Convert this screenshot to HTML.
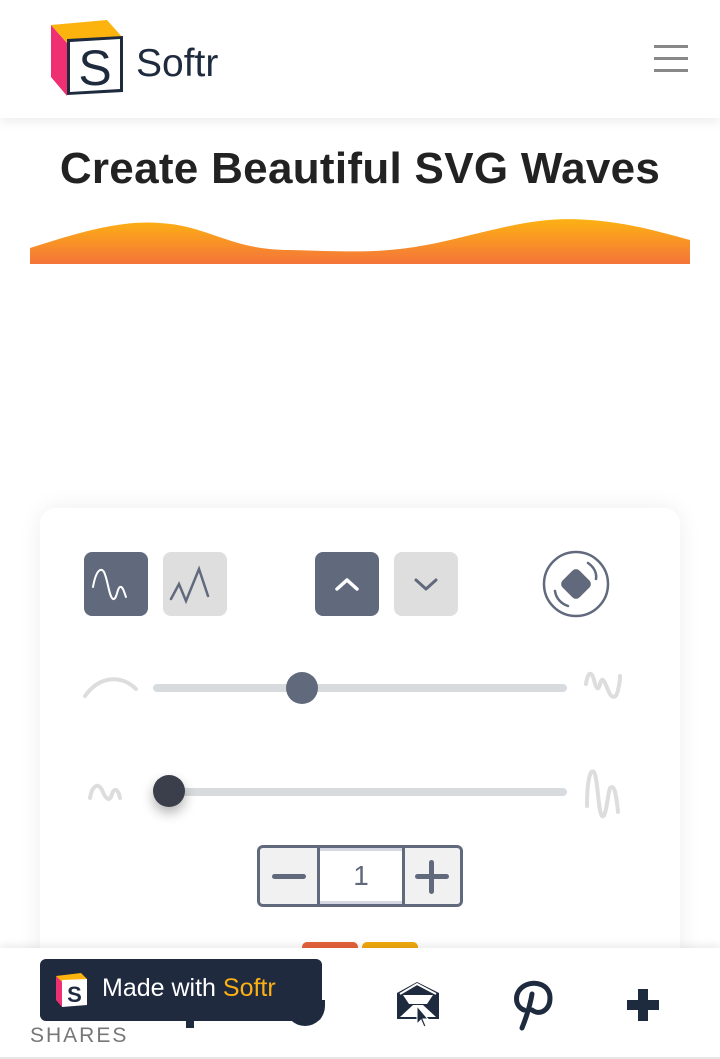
<!DOCTYPE html>
<html><head><meta charset="utf-8"><style>
*{margin:0;padding:0;box-sizing:border-box}
html,body{width:720px;height:1059px;overflow:hidden}
body{background:#fff;font-family:"Liberation Sans",sans-serif;position:relative}
.hdr{position:absolute;left:0;top:0;width:720px;height:118px;background:#fff;box-shadow:0 4px 10px rgba(0,0,0,.07);z-index:2}
h1{position:absolute;top:144px;width:720px;text-align:center;font-size:44px;font-weight:bold;color:#222;letter-spacing:0.3px}
.card{position:absolute;left:40px;top:508px;width:640px;height:551px;background:#fff;border-radius:16px 16px 0 0;box-shadow:0 0 24px rgba(0,0,0,.07)}
.btn{position:absolute;width:64px;height:64px;border-radius:8px}
.dk{background:#616a7c}.lt{background:#dedede}
.track{position:absolute;height:8px;border-radius:4px;background:#d8dbde}
.thumb{position:absolute;border-radius:50%}
.bar{position:absolute;left:0;top:948px;width:720px;height:111px;background:#fff;box-shadow:0 -3px 8px rgba(0,0,0,.08);border-bottom:2px solid #e6e6e6}
</style></head><body>
<div class="hdr">
<svg style="position:absolute;left:50px;top:19px" width="76" height="78" viewBox="0 0 76 78">
<polygon points="1,6 17,24 17,77 1,58" fill="#ee2f72"/>
<polygon points="1,6 57,1 73,19 17,24" fill="#fcb30e"/>
<polygon points="17,20 73,17 73,73 17,76" fill="#1e2a3e"/>
<polygon points="20,23 70,20 70,70 20,73" fill="#fff"/>
<text x="45" y="66" font-family="Liberation Sans" font-size="50" fill="#1e2a3e" text-anchor="middle">S</text>
</svg>
<div style="position:absolute;left:136px;top:42px;font-size:39px;color:#1e2a3e">Softr</div>
<div style="position:absolute;left:654px;top:45px;width:34px">
<div style="height:3px;background:#888;margin-bottom:9px"></div><div style="height:3px;background:#888;margin-bottom:9px"></div><div style="height:3px;background:#888"></div></div>
</div>
<h1>Create Beautiful SVG Waves</h1>
<svg style="position:absolute;left:30px;top:218px" width="660" height="46" viewBox="0 0 660 46">
<defs><linearGradient id="g" x1="0" y1="0" x2="0" y2="1"><stop offset="0" stop-color="#fdb212"/><stop offset="1" stop-color="#f4743a"/></linearGradient></defs>
<path d="M0,30 C50,14 90,2 130,5 C180,8 200,32 260,32 C330,34 360,36 420,22 C480,8 510,-2 560,2 C600,5 630,14 660,22 L660,46 L0,46Z" fill="url(#g)"/>
</svg>
<div class="card"></div>
<div class="btn dk" style="left:84px;top:552px"><svg width="64" height="64" viewBox="0 0 64 64"><path d="M9,35 C12,18 17,15 20,20 C24,28 25,45 29,47 C33,48 33,36 36,35 C39,34 40,40 42,45" fill="none" stroke="#fff" stroke-width="2" stroke-linecap="round"/></svg></div>
<div class="btn lt" style="left:163px;top:552px"><svg width="64" height="64" viewBox="0 0 64 64"><path d="M8,47 L16,32 L23,49 L36,17 L45,44" fill="none" stroke="#616a7c" stroke-width="2.5" stroke-linecap="round"/></svg></div>
<div class="btn dk" style="left:315px;top:552px"><svg width="64" height="64" viewBox="0 0 64 64"><path d="M22,37 L32,28 L42,37" fill="none" stroke="#fff" stroke-width="3.5" stroke-linecap="round" stroke-linejoin="round"/></svg></div>
<div class="btn lt" style="left:394px;top:552px"><svg width="64" height="64" viewBox="0 0 64 64"><path d="M22,28 L32,37 L42,28" fill="none" stroke="#616a7c" stroke-width="3" stroke-linecap="round" stroke-linejoin="round"/></svg></div>
<svg style="position:absolute;left:540px;top:549px" width="72" height="72" viewBox="0 0 72 72">
<ellipse cx="36" cy="35" rx="32" ry="32" fill="none" stroke="#616a7c" stroke-width="2.5"/>
<rect x="24" y="23" width="24" height="24" rx="5" fill="#616a7c" transform="rotate(45 36 35)"/>
<path d="M48,14 C54,18 57,24 56,30" fill="none" stroke="#616a7c" stroke-width="2.5" stroke-linecap="round"/>
<path d="M15,42 C16,50 22,55 28,57" fill="none" stroke="#616a7c" stroke-width="2.5" stroke-linecap="round"/>
</svg>
<svg style="position:absolute;left:80px;top:670px" width="70" height="36"><path d="M5,26 C20,5 42,5 56,19" fill="none" stroke="#ddd" stroke-width="4" stroke-linecap="round"/></svg>
<div class="track" style="left:153px;top:684px;width:414px"></div>
<div class="thumb" style="left:286px;top:672px;width:32px;height:32px;background:#616a7c"></div>
<svg style="position:absolute;left:580px;top:664px" width="56" height="44"><path d="M6,20 C8,6 12,8 14,16 C16,24 18,28 20,20 C22,12 24,16 28,26 C31,34 36,36 38,26 C40,18 40,14 40,12" fill="none" stroke="#ddd" stroke-width="4" stroke-linecap="round"/></svg>
<svg style="position:absolute;left:82px;top:772px" width="60" height="36"><path d="M8,26 C10,14 16,10 20,18 C24,28 28,30 30,22 C32,16 36,16 38,26" fill="none" stroke="#ddd" stroke-width="4" stroke-linecap="round"/></svg>
<div class="track" style="left:160px;top:788px;width:407px"></div>
<div class="thumb" style="left:153px;top:775px;width:32px;height:32px;background:#3a3f4b;box-shadow:0 6px 12px rgba(0,0,0,.3)"></div>
<svg style="position:absolute;left:580px;top:762px" width="56" height="60"><path d="M7,44 C7,20 10,6 14,10 C18,16 18,50 22,54 C26,58 28,30 30,26 C34,22 36,30 38,50" fill="none" stroke="#ddd" stroke-width="4" stroke-linecap="round"/></svg>
<div style="position:absolute;left:257px;top:845px;width:206px;height:62px;border-radius:6px;border:3px solid #616a7c;background:#d6d9e2;overflow:hidden">
<div style="position:absolute;left:0;top:0;width:60px;height:56px;background:#f1f1f1;border-right:3px solid #616a7c"></div>
<div style="position:absolute;left:60px;top:3px;width:82px;height:50px;background:#fff;text-align:center;line-height:50px;font-size:28px;color:#616a7c">1</div>
<div style="position:absolute;left:142px;top:0;width:58px;height:56px;background:#f1f1f1;border-left:3px solid #616a7c"></div>
<div style="position:absolute;left:12px;top:26px;width:34px;height:5px;border-radius:3px;background:#616a7c"></div>
<div style="position:absolute;left:155px;top:26px;width:34px;height:5px;border-radius:3px;background:#616a7c"></div>
<div style="position:absolute;left:169px;top:12px;width:5px;height:34px;border-radius:3px;background:#616a7c"></div>
</div>
<div style="position:absolute;left:302px;top:942px;width:56px;height:20px;background:#e5633b;border-radius:5px"></div>
<div style="position:absolute;left:362px;top:942px;width:56px;height:20px;background:#f0a80d;border-radius:5px"></div>
<div class="bar"></div>
<div style="position:absolute;left:30px;top:1024px;font-size:21px;color:#777;letter-spacing:2px">SHARES</div>
<div style="position:absolute;left:186px;top:1010px;width:8px;height:18px;background:#1e2a3e"></div>
<div style="position:absolute;left:285px;top:1000px;width:40px;height:26px;border-radius:0 0 20px 20px;background:#1e2a3e"></div>
<svg style="position:absolute;left:395px;top:980px" width="48" height="50" viewBox="0 0 48 50">
<path d="M2,13 L22,2 L44,13 L44,39 L2,39Z" fill="#1e2a3e"/>
<path d="M5,14 L22,4 L41,14" fill="none" stroke="#fff" stroke-width="2"/>
<path d="M8,15 L38,15 L32,24 L14,24Z" fill="#fff"/>
<path d="M5,37 L18,25 L28,25 L41,37Z" fill="#fff"/>
<path d="M22,26 L22,44 L26,40 L29,47 L31,46 L28,39 L33,39Z" fill="#1e2a3e" stroke="#fff" stroke-width="1"/>
</svg>
<svg style="position:absolute;left:510px;top:980px" width="44" height="52" viewBox="0 0 44 52">
<path d="M14,30 C4,26 4,12 14,6 C24,0 40,4 40,18 C40,30 30,36 22,30 M22,14 C20,26 16,38 12,48" fill="none" stroke="#1e2a3e" stroke-width="5" stroke-linecap="round"/>
</svg>
<div style="position:absolute;left:627px;top:1000px;width:32px;height:10px;background:#1e2a3e"></div>
<div style="position:absolute;left:638px;top:989px;width:10px;height:32px;background:#1e2a3e"></div>
<div style="position:absolute;left:40px;top:959px;width:282px;height:62px;background:#1f2a3f;border-radius:6px">
<svg style="position:absolute;left:15px;top:13px" width="34" height="36" viewBox="0 0 34 36">
<polygon points="1,4 7,10 7,35 1,28" fill="#ee2f72"/>
<polygon points="1,4 26,1 32,7 7,10" fill="#fcb30e"/>
<polygon points="7,8 32,7 32,33 7,35" fill="#fff"/>
<text x="19.5" y="30" font-family="Liberation Sans" font-weight="bold" font-size="22" fill="#1e2a3e" text-anchor="middle">S</text>
</svg>
<div style="position:absolute;left:62px;top:15px;font-size:25px;color:#fff">Made with <span style="color:#fbb014">Softr</span></div>
</div>
</body></html>
